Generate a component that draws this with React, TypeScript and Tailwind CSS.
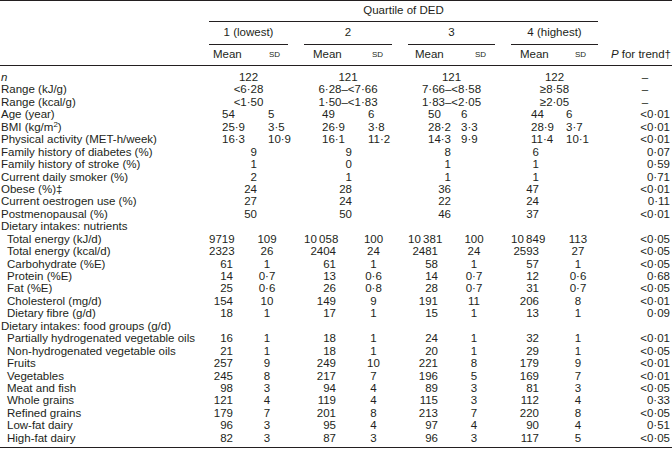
import React from "react";

type Kind = "span" | "stat" | "pct" | "head" | "nut";

type Row = {
  label: React.ReactNode;
  kind: Kind;
  sub?: boolean;
  vals?: string[][];
  p?: string;
};

const BODY_COLS =
  "grid grid-cols-[209px_41px_38px_16px_51px_37px_16px_48px_39px_16px_49px_38px_74px]";

// per-group alignment tweaks, written out in full so tailwind picks them up
const statMean = ["pl-[13px]", "pl-[18px]", "pl-[20px]", "pl-[20px]"];
const statSd = ["pl-[18px]", "pl-[13px]", "pl-[5px]", "pl-[6px]"];
const nutMean = ["pr-[17px]", "pr-[19px]", "pr-[18px]", "pr-[21px]"];
const nutSd = ["pr-[4px]", "pr-0", "pr-[3px]", "pr-[2px]"];
const pctPad = ["pr-[31px]", "pr-[40px]", "pr-[44px]", "pr-[59px]"];
const headMean = ["pl-[4px]", "pl-[9px]", "pl-[7px]", "pl-[9px]"];
const headSd = ["pl-[19px]", "pl-[17px]", "pl-[19px]", "pl-[15px]"];

const rows: Row[] = [
  { label: <i>n</i>, kind: "span", vals: [["122"], ["121"], ["121"], ["122"]], p: "–" },
  { label: "Range (kJ/g)", kind: "span", vals: [["<6·28"], ["6·28–<7·66"], ["7·66–<8·58"], ["≥8·58"]], p: "–" },
  { label: "Range (kcal/g)", kind: "span", vals: [["<1·50"], ["1·50–<1·83"], ["1·83–<2·05"], ["≥2·05"]], p: "–" },
  { label: "Age (year)", kind: "stat", vals: [["54", "5"], ["49", "6"], ["50", "6"], ["44", "6"]], p: "<0·01" },
  {
    label: (
      <>
        BMI (kg/m<sup className="text-[8px] -top-[4px]">2</sup>)
      </>
    ),
    kind: "stat",
    vals: [["25·9", "3·5"], ["26·9", "3·8"], ["28·2", "3·3"], ["28·9", "3·7"]],
    p: "<0·01",
  },
  { label: "Physical activity (MET-h/week)", kind: "stat", vals: [["16·3", "10·9"], ["16·1", "11·2"], ["14·3", "9·9"], ["11·4", "10·1"]], p: "<0·01" },
  { label: "Family history of diabetes (%)", kind: "pct", vals: [["9"], ["9"], ["8"], ["6"]], p: "0·07" },
  { label: "Family history of stroke (%)", kind: "pct", vals: [["1"], ["0"], ["1"], ["1"]], p: "0·59" },
  { label: "Current daily smoker (%)", kind: "pct", vals: [["2"], ["1"], ["1"], ["1"]], p: "0·71" },
  { label: "Obese (%)‡", kind: "pct", vals: [["24"], ["28"], ["36"], ["47"]], p: "<0·01" },
  { label: "Current oestrogen use (%)", kind: "pct", vals: [["27"], ["24"], ["22"], ["24"]], p: "0·11" },
  { label: "Postmenopausal (%)", kind: "pct", vals: [["50"], ["50"], ["46"], ["37"]], p: "<0·01" },
  { label: "Dietary intakes: nutrients", kind: "head" },
  { label: "Total energy (kJ/d)", kind: "nut", sub: true, vals: [["9719", "109"], ["10\u2009058", "100"], ["10\u2009381", "100"], ["10\u2009849", "113"]], p: "<0·05" },
  { label: "Total energy (kcal/d)", kind: "nut", sub: true, vals: [["2323", "26"], ["2404", "24"], ["2481", "24"], ["2593", "27"]], p: "<0·05" },
  { label: "Carbohydrate (%E)", kind: "nut", sub: true, vals: [["61", "1"], ["61", "1"], ["58", "1"], ["57", "1"]], p: "<0·05" },
  { label: "Protein (%E)", kind: "nut", sub: true, vals: [["14", "0·7"], ["13", "0·6"], ["14", "0·7"], ["12", "0·6"]], p: "0·68" },
  { label: "Fat (%E)", kind: "nut", sub: true, vals: [["25", "0·6"], ["26", "0·8"], ["28", "0·7"], ["31", "0·7"]], p: "<0·05" },
  { label: "Cholesterol (mg/d)", kind: "nut", sub: true, vals: [["154", "10"], ["149", "9"], ["191", "11"], ["206", "8"]], p: "<0·01" },
  { label: "Dietary fibre (g/d)", kind: "nut", sub: true, vals: [["18", "1"], ["17", "1"], ["15", "1"], ["13", "1"]], p: "0·09" },
  { label: "Dietary intakes: food groups (g/d)", kind: "head" },
  { label: "Partially hydrogenated vegetable oils", kind: "nut", sub: true, vals: [["16", "1"], ["18", "1"], ["24", "1"], ["32", "1"]], p: "<0·01" },
  { label: "Non-hydrogenated vegetable oils", kind: "nut", sub: true, vals: [["21", "1"], ["18", "1"], ["20", "1"], ["29", "1"]], p: "<0·05" },
  { label: "Fruits", kind: "nut", sub: true, vals: [["257", "9"], ["249", "10"], ["221", "8"], ["179", "9"]], p: "<0·01" },
  { label: "Vegetables", kind: "nut", sub: true, vals: [["245", "8"], ["217", "7"], ["196", "5"], ["169", "7"]], p: "<0·01" },
  { label: "Meat and fish", kind: "nut", sub: true, vals: [["98", "3"], ["94", "4"], ["89", "3"], ["81", "3"]], p: "<0·05" },
  { label: "Whole grains", kind: "nut", sub: true, vals: [["121", "4"], ["119", "4"], ["115", "3"], ["112", "4"]], p: "0·33" },
  { label: "Refined grains", kind: "nut", sub: true, vals: [["179", "7"], ["201", "8"], ["213", "7"], ["220", "8"]], p: "<0·05" },
  { label: "Low-fat dairy", kind: "nut", sub: true, vals: [["96", "3"], ["95", "4"], ["97", "4"], ["90", "4"]], p: "0·51" },
  { label: "High-fat dairy", kind: "nut", sub: true, vals: [["82", "3"], ["87", "3"], ["96", "3"], ["117", "5"]], p: "<0·05" },
];

const groups = ["1 (lowest)", "2", "3", "4 (highest)"];

const GroupCells = ({ row, g }: { row: Row; g: number }) => {
  const v = row.vals ? row.vals[g] : [];
  if (row.kind === "head") return <div className="col-span-2" />;
  if (row.kind === "span")
    return <div className="col-span-2 text-center whitespace-nowrap">{v[0]}</div>;
  if (row.kind === "pct")
    return <div className={`col-span-2 text-right ${pctPad[g]}`}>{v[0]}</div>;
  if (row.kind === "stat")
    return (
      <>
        <div className={`text-left ${statMean[g]}`}>{v[0]}</div>
        <div className={`text-left ${statSd[g]}`}>{v[1]}</div>
      </>
    );
  return (
    <>
      <div className={`text-right whitespace-nowrap ${nutMean[g]}`}>{v[0]}</div>
      <div className={`text-center ${nutSd[g]}`}>{v[1]}</div>
    </>
  );
};

const BodyRow = ({ row }: { row: Row }) => (
  <div className={`${BODY_COLS} h-[12.45px] leading-[12.45px]`}>
    <div className={`whitespace-nowrap ${row.sub ? "pl-[7px]" : "pl-[1px]"}`}>{row.label}</div>
    {[0, 1, 2, 3].map((g) => (
      <React.Fragment key={g}>
        <GroupCells row={row} g={g} />
        {g < 3 && <div />}
      </React.Fragment>
    ))}
    {row.p === "–" ? (
      <div className="text-center pl-[20px]">–</div>
    ) : (
      <div className="text-right pr-[2px]">{row.p}</div>
    )}
  </div>
);

const App = () => {
  return (
    <div className="w-[672px] h-[454px] bg-white text-[#231f20] text-[11.5px] font-['Liberation_Sans',Arial,sans-serif]">
      <div className="border-t-[1.5px] border-[#231f20]">
        <div className="grid grid-cols-[209px_389px_74px] h-[21px]">
          <div />
          <div className="border-b border-[#231f20] flex items-center justify-center">
            Quartile of DED
          </div>
          <div />
        </div>
        <div className="grid grid-cols-[209px_79px_16px_88px_16px_87px_16px_87px_74px] h-[23px]">
          <div />
          {groups.map((g, i) => (
            <React.Fragment key={g}>
              <div className="border-b border-[#231f20] flex items-center justify-center">{g}</div>
              {i < 3 && <div />}
            </React.Fragment>
          ))}
          <div />
        </div>
        <div className={`${BODY_COLS} h-[21px] items-center border-b-[1.5px] border-[#231f20]`}>
          <div />
          {[0, 1, 2, 3].map((g) => (
            <React.Fragment key={g}>
              <div className={headMean[g]}>Mean</div>
              <div className={`${headSd[g]} text-[8px]`}>SD</div>
              {g < 3 && <div />}
            </React.Fragment>
          ))}
          <div className="text-right pr-[1px] whitespace-nowrap">
            <i>P</i> for trend†
          </div>
        </div>
      </div>
      <div className="pt-[5px] pb-[3px] border-b-[1.5px] border-[#231f20]">
        {rows.map((r, i) => (
          <BodyRow key={i} row={r} />
        ))}
      </div>
    </div>
  );
};

export default App;
